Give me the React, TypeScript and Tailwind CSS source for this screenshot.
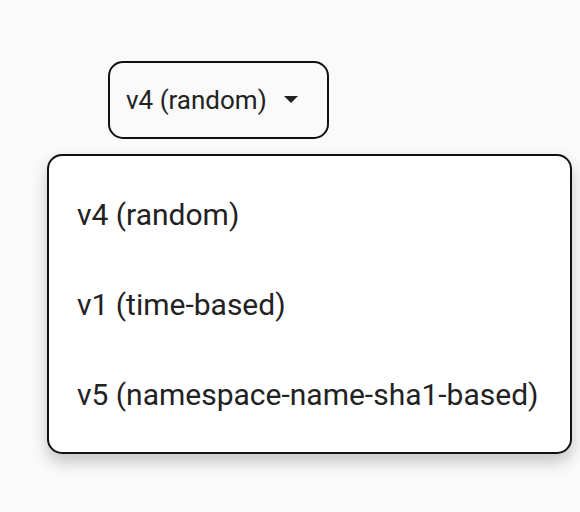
import React from "react";

const options = ["v4 (random)", "v1 (time-based)", "v5 (namespace-name-sha1-based)"];

export default function App() {
  return (
    <div
      className="w-[580px] h-[512px] bg-[#fafafa] overflow-hidden"
      style={{ fontFamily: "Roboto, 'Liberation Sans', sans-serif" }}
    >
      <div className="pt-[61px] pl-[108px]">
        <button className="flex items-center w-[221px] h-[78px] pl-[16px] border-2 border-[#111] rounded-[15px] bg-[#fafafa] text-[#222] text-[26px]">
          <span>v4 (random)</span>
          <svg className="ml-[17px]" width="14" height="8" viewBox="0 0 14 8">
            <path d="M0 0 L14 0 L7 7 Z" fill="#222" />
          </svg>
        </button>
      </div>
      <div className="mt-[15px] ml-[47px] w-[525px] py-[13px] bg-white border-2 border-[#111] rounded-[15px] shadow-[0_8px_16px_rgba(0,0,0,0.22)]">
        {options.map((o) => (
          <div key={o} className="h-[90px] flex items-center pl-[28px] text-[30px] text-[#222]">
            {o}
          </div>
        ))}
      </div>
    </div>
  );
}
